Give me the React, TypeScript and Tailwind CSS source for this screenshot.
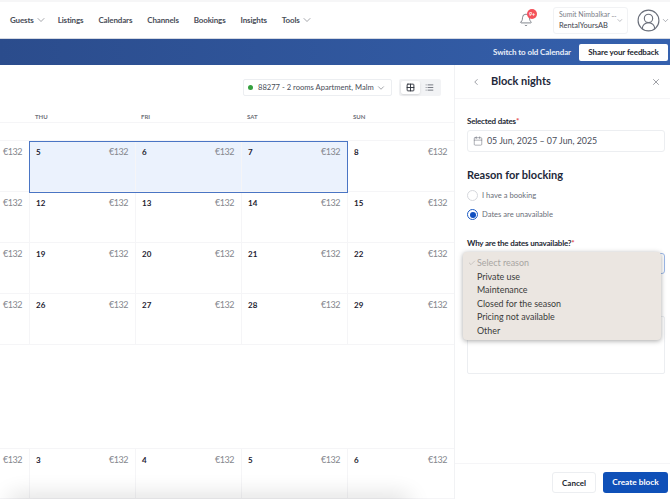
import { Calendar, Check, ChevronDown, ChevronLeft, Grid2x2, List, X, Bell, CircleUserRound } from 'lucide-react'

const navItems = ['Listings', 'Calendars', 'Channels', 'Bookings', 'Insights']
const reasons = ['Private use', 'Maintenance', 'Closed for the season', 'Pricing not available', 'Other']

const rows = [
  { height: 'h-[51px]', days: ['5', '6', '7', '8'] },
  { height: 'h-[51px]', days: ['12', '13', '14', '15'] },
  { height: 'h-[51px]', days: ['19', '20', '21', '22'] },
  { height: 'h-[51px]', days: ['26', '27', '28', '29'] },
]

function Price() {
  return <span className="text-[9px] leading-[14px] tracking-[-0.5px] text-[#85878e]">€132</span>
}

function Week({ days, selected, height }: { days: string[]; selected?: boolean; height: string }) {
  return (
    <div className={`grid grid-cols-[29px_106px_106px_106px_107px] ${height} border-b border-[#f5f5f7]`}>
      <div className="flex justify-end pt-[4px] pr-[7px]">
        <Price />
      </div>
      {days.map((day, i) => (
        <div
          key={day}
          className={`flex justify-between border-l border-[#f5f5f7] pt-[4px] pr-[7px] pl-[6px] ${
            selected && i < 3 ? 'bg-[#ebf2fd]' : ''
          }`}
        >
          <span className="text-[8px] leading-[14px] font-bold text-[#1d2230]">{day}</span>
          <Price />
        </div>
      ))}
    </div>
  )
}

function Label({ text }: { text: string }) {
  return (
    <div className="text-[8px] leading-[12px] font-bold tracking-[-0.2px] text-[#262a36]">
      {text}
      <span className="text-[#e5484d]">*</span>
    </div>
  )
}

export default function App() {
  return (
    <div className="flex h-[499px] w-[670px] flex-col overflow-hidden bg-white font-['Lato',sans-serif]">
      {/* top nav */}
      <header className="flex h-[39px] shrink-0 items-center border-t-2 border-b border-t-[#f6f6f7] border-b-[#d5d9e2] pl-[10px] text-[8px] font-bold tracking-[-0.15px] text-[#4a4e59]">
        <span className="flex items-center">
          Guests <ChevronDown size={12} strokeWidth={1} className="-mr-[4px] ml-[1px]" />
        </span>
        {navItems.map((item) => (
          <span key={item} className="ml-[15px]">
            {item}
          </span>
        ))}
        <span className="ml-[15px] flex items-center">
          Tools <ChevronDown size={12} strokeWidth={1} className="ml-[1px]" />
        </span>
        <div className="relative mr-[20px] ml-auto">
          <Bell size={14} strokeWidth={1.2} className="text-[#4f5460]" />
          <span className="absolute -top-[4px] left-[8px] flex h-[10px] w-[10px] items-center justify-center rounded-full bg-[#f4525a] text-[5.5px] text-white">
            9+
          </span>
        </div>
        <div className="flex h-[27px] w-[75px] items-center justify-between rounded-[3px] border border-[#f1f2f4] pr-[3px] pl-[5px]">
          <div className="leading-[9px] tracking-normal">
            <div className="text-[7px] font-normal whitespace-nowrap text-[#7a7e87]">Sumit Nimbalkar ...</div>
            <div className="mt-[2px] text-[7.5px] font-normal text-[#3d414c]">RentalYoursAB</div>
          </div>
          <ChevronDown size={11} strokeWidth={1.2} className="text-[#555a66]" />
        </div>
        <CircleUserRound size={25} strokeWidth={1.1} className="ml-[8px] text-[#6a6f7a]" />
        <ChevronDown size={9} strokeWidth={1.2} className="text-[#555a66]" />
      </header>

      {/* banner */}
      <div className="flex h-[26px] shrink-0 items-center justify-end bg-gradient-to-r from-[#2b4c8c] to-[#3561ae] pr-[2px]">
        <span className="mr-[8px] text-[8px] font-bold tracking-[-0.1px] text-[#e8eef9]">Switch to old Calendar</span>
        <button className="h-[17px] w-[89px] rounded-[2px] bg-white text-[8px] font-bold tracking-[-0.1px] text-[#22262f]">
          Share your feedback
        </button>
      </div>

      <div className="flex min-h-0 flex-1">
        {/* calendar */}
        <main className="relative w-[454px] shrink-0">
          <div className="flex h-[45px] items-start pt-[14px] pl-[243px]">
            <div className="flex h-[17px] w-[149px] items-center rounded-[2px] border border-[#eceef1] pr-[5px] pl-[4px] text-[7.6px] text-[#4a4e59]">
              <span className="mr-[5px] h-[5px] w-[5px] shrink-0 rounded-full bg-[#35a03f]" />
              <span className="min-w-0 flex-1 whitespace-nowrap">88277 - 2 rooms Apartment, Malm</span>
              <ChevronDown size={10} strokeWidth={1.2} className="ml-[3px] shrink-0" />
            </div>
            <div className="ml-[7px] flex h-[17px] w-[42px] items-center rounded-[2px] bg-[#f2f3f5] p-[2px]">
              <span className="flex h-[13px] w-[19px] items-center justify-center rounded-[2px] bg-white shadow-sm">
                <Grid2x2 size={9} strokeWidth={2.5} className="text-[#30343e]" />
              </span>
              <span className="flex h-[13px] w-[19px] items-center justify-center">
                <List size={9} className="text-[#50545f]" />
              </span>
            </div>
          </div>

          <div className="grid h-[13px] grid-cols-[29px_106px_106px_106px_107px] border-b border-[#f5f5f7] text-[6px] leading-[13px] font-bold text-[#6f727a]">
            <span />
            <span className="pl-[6px]">THU</span>
            <span className="pl-[6px]">FRI</span>
            <span className="pl-[6px]">SAT</span>
            <span className="pl-[6px]">SUN</span>
          </div>
          <div className="h-[18px] border-b border-[#f5f5f7]" />

          <div className="relative">
            <div className="absolute top-0 left-[29px] h-[52px] w-[319px] border-[1.5px] border-[#4a75c4]" />
            {rows.map((row, i) => (
              <Week key={row.days[0]} days={row.days} height={row.height} selected={i === 0} />
            ))}
          </div>
          <div className="h-[104px] border-b border-[#f5f5f7]" />
          <Week days={['3', '4', '5', '6']} height="h-[50px]" />
          {/* shadow of the toolbar that sits below the fold */}
          <div className="absolute -bottom-[10px] left-[12px] h-[10px] w-[395px] rounded-[8px] shadow-[0_0_22px_4px_rgba(0,0,0,0.14)]" />
        </main>

        {/* side panel */}
        <aside className="z-10 flex w-[216px] shrink-0 flex-col border-l border-[#f1f2f4] bg-white">
          <div className="flex h-[34px] shrink-0 items-center border-b border-[#f5f5f7] pr-[9px] pl-[16px]">
            <ChevronLeft size={10} strokeWidth={1.3} className="text-[#4a4e59]" />
            <h2 className="ml-[10px] text-[11px] font-bold text-[#22283a]">Block nights</h2>
            <X size={10} strokeWidth={1.3} className="ml-auto text-[#4a4e59]" />
          </div>

          <div className="relative min-h-0 flex-1 pt-[16px] pr-[5px] pl-[12px]">
            <Label text="Selected dates" />
            <div className="mt-[3px] flex h-[22px] items-center rounded-[3px] border border-[#eceef1] pl-[5px] text-[8.8px] text-[#4a4e59]">
              <Calendar size={10} strokeWidth={1.2} className="mr-[4px] text-[#5f636e]" />
              05 Jun, 2025 – 07 Jun, 2025
            </div>
            <h3 className="mt-[16px] text-[11px] leading-[14px] font-bold text-[#22283a]">Reason for blocking</h3>
            <div className="mt-[4px] flex h-[19px] items-center text-[7.6px] text-[#6b6f79]">
              <span className="mr-[4px] h-[11px] w-[11px] rounded-full border border-[#d6d8dd]" />I have a booking
            </div>
            <div className="flex h-[19px] items-center text-[7.6px] text-[#6b6f79]">
              <span className="mr-[4px] flex h-[11px] w-[11px] items-center justify-center rounded-full border border-[#1d5cc4]">
                <span className="h-[6px] w-[6px] rounded-full bg-[#0f4fc0]" />
              </span>
              Dates are unavailable
            </div>
            <div className="mt-[13px]">
              <Label text="Why are the dates unavailable?" />
            </div>
            <div className="mt-[4px] h-[21px] rounded-[3px] border border-[#9db9e8]" />
            <div className="mt-[42px] h-[58px] rounded-[2px] border border-[#eceef1]" />

            {/* native select menu */}
            <div className="absolute top-[153px] left-[8px] w-[198px] rounded-[4px] bg-[#ebe6e1] pt-[4px] pb-[3px] pl-[14px] text-[8.9px] leading-[13.5px] text-[#3a3a3a] shadow-[0_1px_5px_rgba(0,0,0,0.35)]">
              <div className="relative text-[#a8a5a2]">
                <Check size={8} strokeWidth={1.5} className="absolute top-[3px] -left-[9px]" />
                Select reason
              </div>
              {reasons.map((reason) => (
                <div key={reason}>{reason}</div>
              ))}
            </div>
          </div>

          <div className="flex h-[36px] shrink-0 items-start justify-end gap-[7px] border-t border-[#f5f5f7] pt-[8px] pr-[2px]">
            <button className="h-[21px] w-[44px] rounded-[3px] border border-[#eceef1] bg-white text-[8px] font-bold text-[#22262f]">
              Cancel
            </button>
            <button className="h-[21px] w-[65px] rounded-[3px] bg-[#0f50b8] text-[8.3px] font-bold text-white">
              Create block
            </button>
          </div>
        </aside>
      </div>
    </div>
  )
}
